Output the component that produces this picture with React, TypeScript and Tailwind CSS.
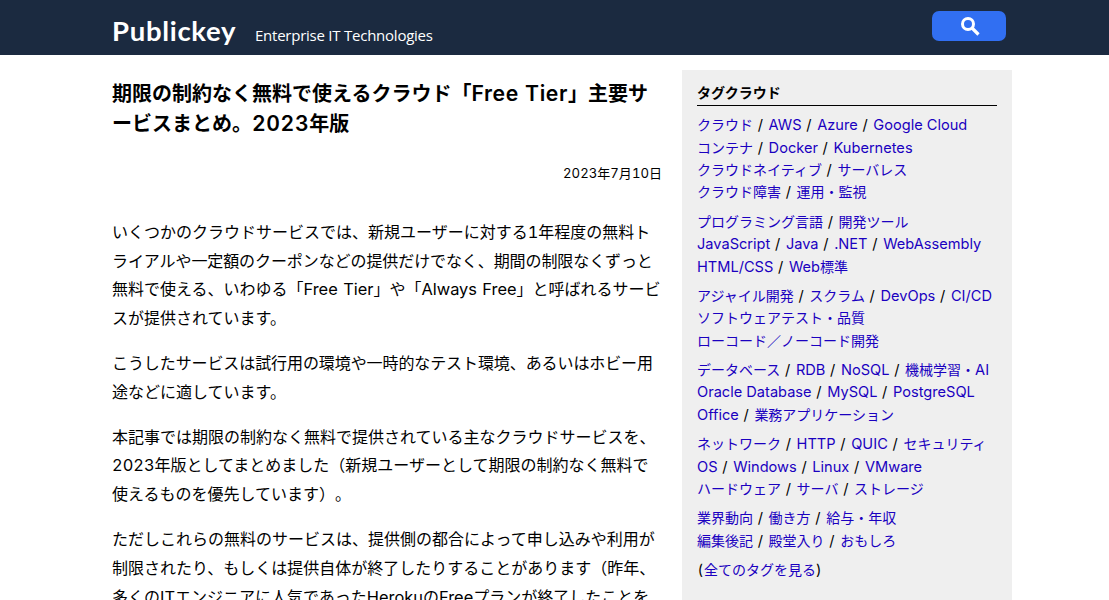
import React from 'react';

const tagGroups: string[][][] = [
  [
    ['クラウド', 'AWS', 'Azure', 'Google Cloud'],
    ['コンテナ', 'Docker', 'Kubernetes'],
    ['クラウドネイティブ', 'サーバレス'],
    ['クラウド障害', '運用・監視'],
  ],
  [
    ['プログラミング言語', '開発ツール'],
    ['JavaScript', 'Java', '.NET', 'WebAssembly'],
    ['HTML/CSS', 'Web標準'],
  ],
  [
    ['アジャイル開発', 'スクラム', 'DevOps', 'CI/CD'],
    ['ソフトウェアテスト・品質'],
    ['ローコード／ノーコード開発'],
  ],
  [
    ['データベース', 'RDB', 'NoSQL', '機械学習・AI'],
    ['Oracle Database', 'MySQL', 'PostgreSQL'],
    ['Office', '業務アプリケーション'],
  ],
  [
    ['ネットワーク', 'HTTP', 'QUIC', 'セキュリティ'],
    ['OS', 'Windows', 'Linux', 'VMware'],
    ['ハードウェア', 'サーバ', 'ストレージ'],
  ],
  [
    ['業界動向', '働き方', '給与・年収'],
    ['編集後記', '殿堂入り', 'おもしろ'],
  ],
];

type Line = { text: string; tight?: boolean };

const paragraphs: Line[][] = [
  [
    { text: 'いくつかのクラウドサービスでは、新規ユーザーに対する1年程度の無料ト' },
    { text: 'ライアルや一定額のクーポンなどの提供だけでなく、期間の制限なくずっと', tight: true },
    { text: '無料で使える、いわゆる「Free Tier」や「Always Free」と呼ばれるサービ' },
    { text: 'スが提供されています。' },
  ],
  [
    { text: 'こうしたサービスは試行用の環境や一時的なテスト環境、あるいはホビー用', tight: true },
    { text: '途などに適しています。' },
  ],
  [
    { text: '本記事では期限の制約なく無料で提供されている主なクラウドサービスを、' },
    { text: '2023年版としてまとめました（新規ユーザーとして期限の制約なく無料で' },
    { text: '使えるものを優先しています）。' },
  ],
  [
    { text: 'ただしこれらの無料のサービスは、提供側の都合によって申し込みや利用が' },
    { text: '制限されたり、もしくは提供自体が終了したりすることがあります（昨年、' },
    { text: '多くのITエンジニアに人気であったHerokuのFreeプランが終了したことを' },
  ],
];

const sideLatin = "font-['Inter',sans-serif] text-[14.6px] leading-none";
const bodyLatin = "font-['Inter',sans-serif] text-[16.4px] leading-none tabular-nums [word-spacing:1px]";
const titleLatin =
  "font-['Inter',sans-serif] text-[21.2px] font-semibold leading-none tracking-[0.6px] tabular-nums";
const dateLatin = "font-['Inter',sans-serif] text-[13.2px] leading-none tabular-nums";

function Mixed({ text, latin }: { text: string; latin: string }) {
  return (
    <>
      {text.split(/([\x20-\x7e]+)/).map((part, i) =>
        i % 2 ? (
          <span key={i} className={latin}>
            {part}
          </span>
        ) : (
          part
        ),
      )}
    </>
  );
}

function Header() {
  return (
    <header className="h-[55px] bg-[#1b2a40]">
      <div className="ml-[104px] flex w-[908px] justify-between pl-[8px] pr-[6px]">
        <div className="flex items-baseline text-white">
          <span className="w-[125px] font-['Lato',sans-serif] text-[27.5px] font-bold leading-[62px] tracking-[0.7px]">
            Publickey
          </span>
          <span className="ml-[18px] font-['Open_Sans',sans-serif] text-[15px] tracking-[-0.24px]">
            Enterprise IT Technologies
          </span>
        </div>
        <button
          aria-label="検索"
          className="mt-[11px] flex h-[30px] w-[74px] items-center justify-center rounded-[7px] bg-[#316ff2]"
        >
          <svg viewBox="0 0 20 20" className="ml-[2px] h-5 w-5" fill="none" stroke="white">
            <circle cx="8" cy="8" r="5.5" strokeWidth="3" />
            <path d="M12 12l6.5 6.5" strokeWidth="3.2" />
          </svg>
        </button>
      </div>
    </header>
  );
}

function Article() {
  return (
    <main className="w-[558px] whitespace-nowrap pl-[8px]">
      <h1 className="pt-[8px] text-[20px] font-bold leading-[30px]">
        <span className="block h-[30px]">
          <Mixed text="期限の制約なく無料で使えるクラウド「Free Tier」主要サ" latin={titleLatin} />
        </span>
        <span className="block h-[30px]">
          <Mixed text="ービスまとめ。2023年版" latin={titleLatin} />
        </span>
      </h1>
      <p className="mt-[24px] h-[22px] text-right text-[13px] leading-[22px]">
        <Mixed text="2023年7月10日" latin={dateLatin} />
      </p>
      <div className="mt-[32.8px] flex flex-col gap-4 text-[16px] leading-[28.8px]">
        {paragraphs.map((lines, i) => (
          <p key={i}>
            {lines.map((line) => (
              <span
                key={line.text}
                className={line.tight ? 'block h-[28.8px] tracking-[-0.09px]' : 'block h-[28.8px]'}
              >
                <Mixed text={line.text} latin={bodyLatin} />
              </span>
            ))}
          </p>
        ))}
      </div>
    </main>
  );
}

function TagCloud() {
  return (
    <aside className="h-[545px] w-[330px] whitespace-nowrap bg-[#efefef] px-[15px] pt-[11px] text-[14px] leading-[22.4px]">
      <h2 className="h-[25px] border-b border-black font-bold">タグクラウド</h2>
      <div className="mt-[7.2px] flex flex-col gap-[7px]">
        {tagGroups.map((group, g) => (
          <p key={g}>
            {group.map((row) => (
              <span key={row[0]} className="block h-[22.4px]">
                {row.map((tag, i) => (
                  <React.Fragment key={tag}>
                    {i > 0 && (
                      <span className={`${sideLatin} inline-block w-[15.6px] pr-px text-center`}>/</span>
                    )}
                    <a className="text-[#1a00c0]">
                      <Mixed text={tag} latin={sideLatin} />
                    </a>
                  </React.Fragment>
                ))}
              </span>
            ))}
          </p>
        ))}
        <p className="h-[22.4px]">
          <span className={`${sideLatin} inline-block w-[7px] text-center`}>(</span>
          <a className="text-[#1a00c0]">全てのタグを見る</a>
          <span className={sideLatin}>)</span>
        </p>
      </div>
    </aside>
  );
}

export default function App() {
  return (
    <div className="h-[600px] w-full overflow-hidden bg-white font-['Noto_Sans_CJK_JP',sans-serif] text-black [text-spacing-trim:space-all]">
      <Header />
      <div className="ml-[104px] flex w-[908px] justify-between pt-[15px]">
        <Article />
        <TagCloud />
      </div>
    </div>
  );
}
